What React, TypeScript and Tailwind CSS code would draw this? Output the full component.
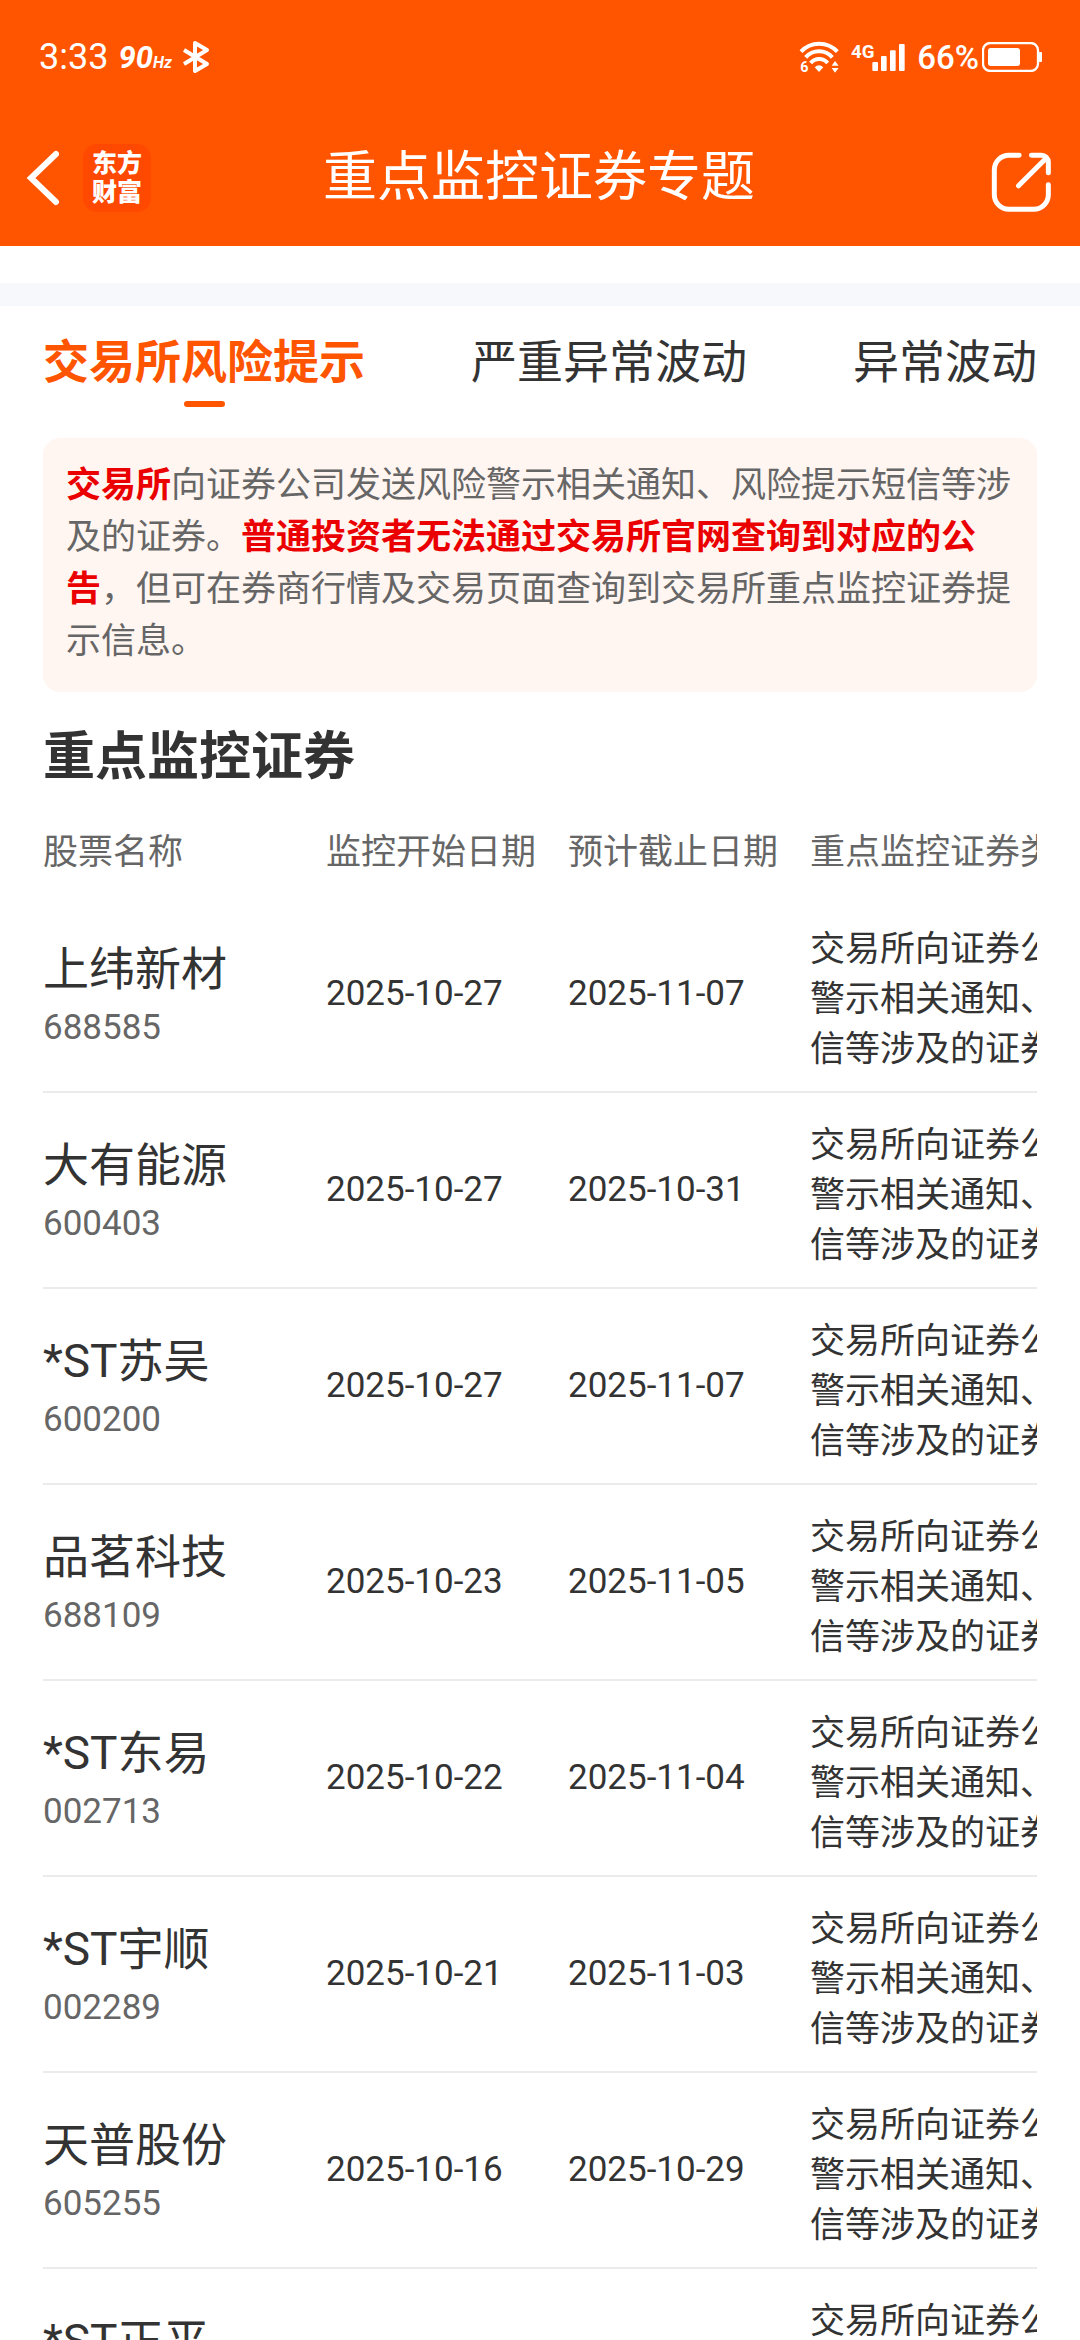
import { useState } from 'react';

interface Stock {
  name: string;
  code: string;
  start: string;
  end: string;
}

const TABS = ['交易所风险提示', '严重异常波动', '异常波动'];

const REASON = '交易所向证券公司发送风险警示相关通知、风险提示短信等涉及的证券';

const STOCKS: Stock[] = [
  { name: '上纬新材', code: '688585', start: '2025-10-27', end: '2025-11-07' },
  { name: '大有能源', code: '600403', start: '2025-10-27', end: '2025-10-31' },
  { name: '*ST苏吴', code: '600200', start: '2025-10-27', end: '2025-11-07' },
  { name: '品茗科技', code: '688109', start: '2025-10-23', end: '2025-11-05' },
  { name: '*ST东易', code: '002713', start: '2025-10-22', end: '2025-11-04' },
  { name: '*ST宇顺', code: '002289', start: '2025-10-21', end: '2025-11-03' },
  { name: '天普股份', code: '605255', start: '2025-10-16', end: '2025-10-29' },
  { name: '*ST正平', code: '603843', start: '2025-10-16', end: '2025-10-29' },
];

export default function App() {
  const [activeTab, setActiveTab] = useState(TABS[0]);

  return (
    <div className="flex h-screen flex-col overflow-hidden bg-white font-['Roboto','Noto_Sans_CJK_SC',sans-serif] text-[#333333]">
      <header className="shrink-0 bg-[#ff5500] text-white">
        <StatusBar />
        <NavBar />
      </header>

      <main className="min-h-0 flex-1 overflow-y-auto [scrollbar-width:none]">
        <div className="mt-[37px] h-[23px] bg-[#f7f8fb]" />

        <div className="px-[43px]">
          <div role="tablist" className="flex items-start justify-between pt-6">
            {TABS.map((tab) => (
              <button
                key={tab}
                type="button"
                role="tab"
                aria-selected={tab === activeTab}
                onClick={() => setActiveTab(tab)}
                className={`flex flex-col items-center gap-[7px] text-[46px] leading-[64px] ${
                  tab === activeTab ? 'font-bold text-[#ff5500]' : ''
                }`}
              >
                {tab}
                {tab === activeTab && <span className="h-[6px] w-[41px] rounded-full bg-[#ff5500]" />}
              </button>
            ))}
          </div>

          <p className="mt-[31px] rounded-[17px] bg-[#fff5f1] px-[23px] pt-[22px] pb-6 text-[35px] leading-[52px] text-[#666666]">
            <strong className="font-bold text-[#ea0000]">交易所</strong>
            向证券公司发送风险警示相关通知、风险提示短信等涉及的证券。
            <strong className="font-bold text-[#ea0000]">普通投资者无法通过交易所官网查询到对应的公告</strong>
            ，但可在券商行情及交易页面查询到交易所重点监控证券提示信息。
          </p>

          <h2 className="mt-[30px] text-[52px] leading-[72px] font-bold">重点监控证券</h2>

          <StockTable />
        </div>
      </main>
    </div>
  );
}

function StatusBar() {
  return (
    <div className="flex h-[114px] items-center justify-between pr-[38px] pl-[39px]">
      <div className="flex items-center">
        <span className="text-[36px] leading-none">3:33</span>
        <span className="ml-[10px] text-[31px] leading-none font-bold italic">
          90<span className="text-[16px]">Hz</span>
        </span>
        <BluetoothIcon />
      </div>
      <div className="flex items-center">
        <WifiIcon />
        <SignalIcon />
        <span className="ml-3 text-[33px] leading-none font-medium">66%</span>
        <BatteryIcon />
      </div>
    </div>
  );
}

function NavBar() {
  return (
    <div className="flex h-[132px] items-center justify-between pr-7 pb-1 pl-[26px]">
      <div className="flex flex-1 items-center gap-6">
        <button type="button" aria-label="返回">
          <svg className="h-[56px] w-[33px]" viewBox="0 0 33 56" fill="none" stroke="currentColor" strokeWidth="6" strokeLinecap="round">
            <path d="M30 4 5 28l25 24" />
          </svg>
        </button>
        <div className="flex size-[68px] flex-col items-center justify-center rounded-[14px] bg-[#ff4800] text-[25px] leading-[29px] font-black">
          <span>东方</span>
          <span>财富</span>
        </div>
      </div>
      <h1 className="text-[54px] leading-[76px]">重点监控证券专题</h1>
      <div className="flex flex-1 justify-end">
        <button type="button" aria-label="分享" className="pt-2">
          <svg className="size-[61px]" viewBox="0 0 184 184" fill="none" stroke="currentColor" strokeWidth="15" strokeLinecap="round">
            <path d="M85 10H54a44 44 0 0 0-44 44v75a44 44 0 0 0 44 44h75a44 44 0 0 0 44-44V99" />
            <path d="M122 10h30a21 21 0 0 1 21 21v32M83 102l84-84" />
          </svg>
        </button>
      </div>
    </div>
  );
}

function StockTable() {
  return (
    <div className="overflow-x-auto [scrollbar-width:none]">
      <table className="w-[1210px] table-fixed text-left text-[35px]">
        <thead>
          <tr className="h-[102px] leading-[50px] text-[#666666]">
            <th className="w-[283px] pt-4 font-normal">股票名称</th>
            <th className="w-[242px] pt-4 font-normal">监控开始日期</th>
            <th className="w-[242px] pt-4 font-normal">预计截止日期</th>
            <th className="pt-4 font-normal">重点监控证券类型</th>
          </tr>
        </thead>
        <tbody>
          {STOCKS.map((stock) => (
            <tr key={stock.code} className="h-[196px] border-b-2 border-[#ebebeb] leading-[50px]">
              <td>
                <div className="text-[46px] leading-[68px]">{stock.name}</div>
                <div className="text-[#666666]">{stock.code}</div>
              </td>
              <td>{stock.start}</td>
              <td>{stock.end}</td>
              <td className="pt-3 pr-4">{REASON}</td>
            </tr>
          ))}
        </tbody>
      </table>
    </div>
  );
}

function BluetoothIcon() {
  return (
    <svg className="ml-[10px] h-[34px] w-7" viewBox="0 0 28 34" fill="none" stroke="currentColor" strokeWidth="4" strokeLinejoin="round">
      <path d="M2 10 25 24 13 31V3l12 7L2 24" />
    </svg>
  );
}

function WifiIcon() {
  return (
    <svg className="h-8 w-10" viewBox="118 118 120 96" fill="none" stroke="currentColor" strokeWidth="12">
      <path d="M124 150a74 74 0 0 1 109 0M138 167a53 53 0 0 1 80 0M153 184a33 33 0 0 1 51 0" />
      <path d="M165 197q13-12 26 0l-13 14zM216 192l10-14 11 14zM216 199l10 14 11-14z" fill="currentColor" stroke="none" />
      <text x="122" y="212" fontSize="43" fontWeight="700" fill="currentColor" stroke="none">
        6
      </text>
    </svg>
  );
}

function SignalIcon() {
  return (
    <svg className="ml-3 h-[30px] w-[54px]" viewBox="272 120 162 90" fill="currentColor">
      <text x="272" y="167" fontSize="56" fontWeight="700">
        4G
      </text>
      <rect x="336" y="180" width="17" height="27" rx="3" />
      <rect x="362" y="162" width="17" height="45" rx="3" />
      <rect x="389" y="145" width="17" height="62" rx="3" />
      <rect x="416" y="126" width="17" height="81" rx="3" />
    </svg>
  );
}

function BatteryIcon() {
  return (
    <svg className="ml-[3px] h-[30px] w-[60px]" viewBox="0 0 180 90" fill="currentColor">
      <rect x="3" y="3" width="165" height="84" rx="22" fill="none" stroke="currentColor" strokeWidth="7" />
      <rect x="18" y="18" width="96" height="54" rx="8" />
      <rect x="170" y="30" width="10" height="30" rx="3" />
    </svg>
  );
}
